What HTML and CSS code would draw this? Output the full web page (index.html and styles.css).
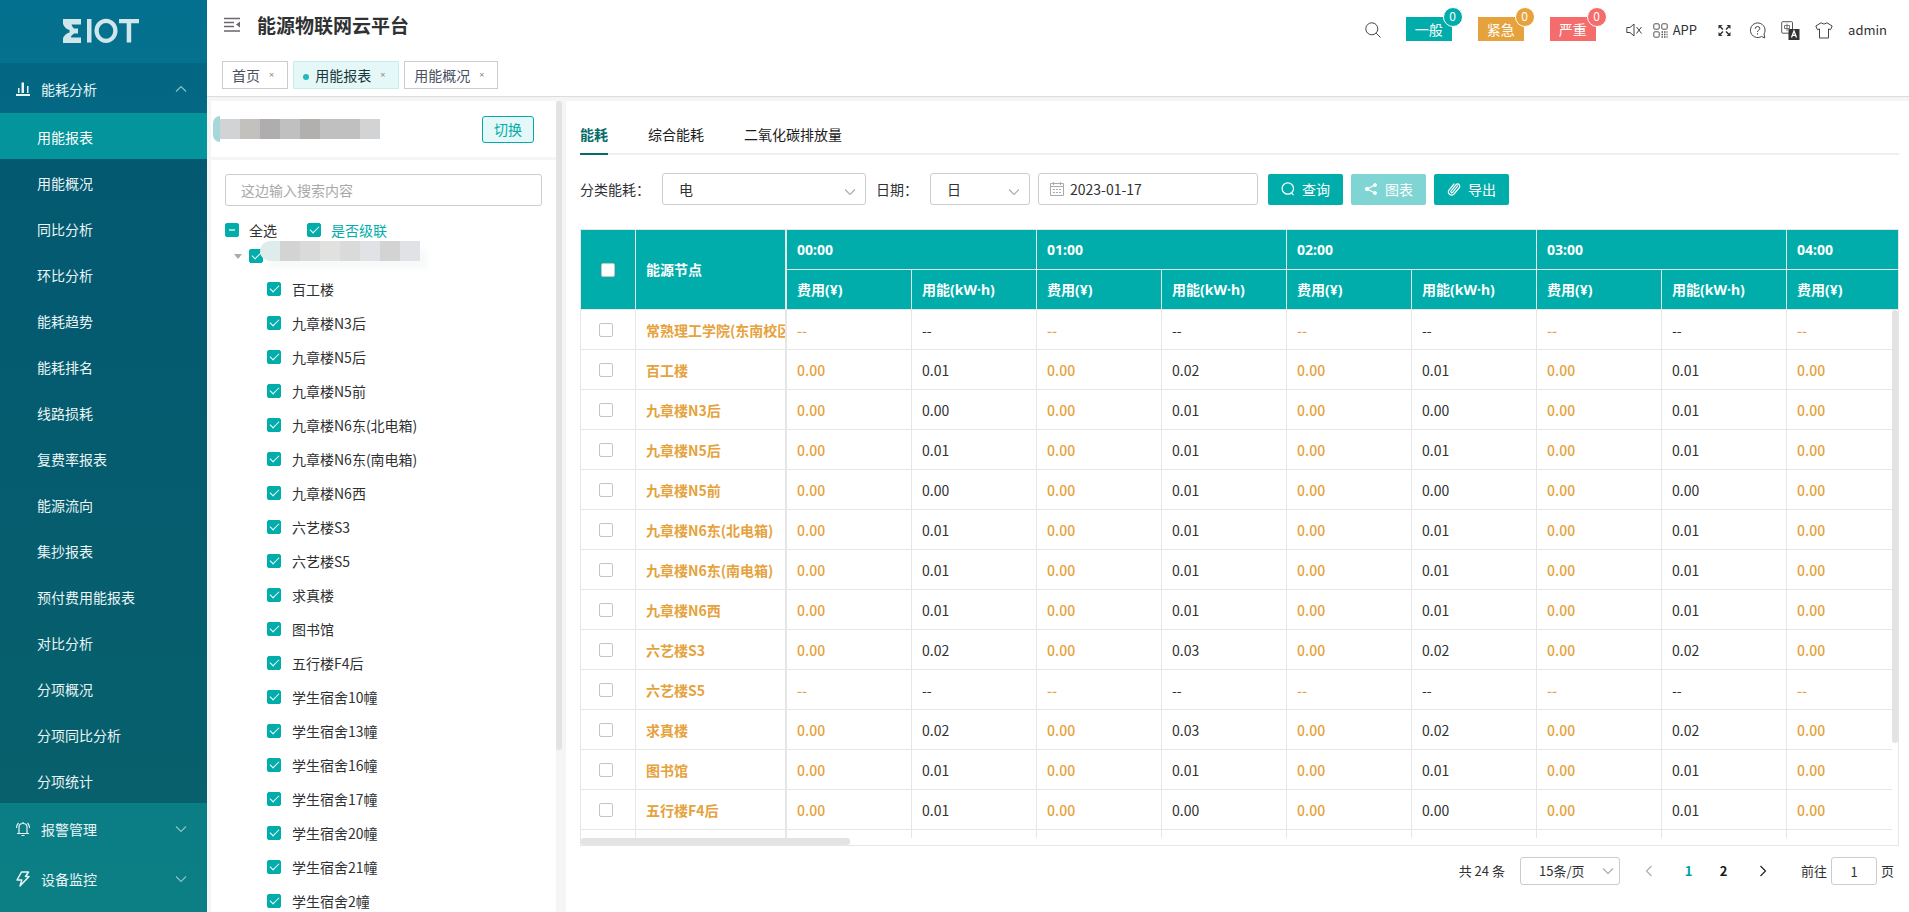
FILE: index.html
```html
<!DOCTYPE html>
<html lang="zh-CN">
<head>
<meta charset="utf-8">
<title>能源物联网云平台</title>
<link rel="stylesheet" href="styles.css">
</head>
<body>
<svg class="defs" aria-hidden="true">
  <symbol id="chev" viewBox="0 0 12 12"><path d="M1 3.5l5 5 5-5" fill="none" stroke="currentColor" stroke-width="1.1"/></symbol>
</svg>
<div class="app">
  <aside class="sidebar">
    <div class="logo">
      <svg width="78" height="26" viewBox="0 0 78 26" role="img" aria-label="EIOT" fill="currentColor">
        <path d="M1 1H19V6.500H9.500Q10 8.500 12 10.500H16V15.500H12Q9 17.500 9 19.500H19V25H1V20Q3 15.500 7.500 14.500V12Q3 11 1 6Z"/>
        <path d="M25 1h4.500v23.500H25zM57 1h20v4.200h-7.800v19.300h-4.500V5.200H57z"/>
        <ellipse cx="44" cy="12.800" rx="9.400" ry="10" fill="none" stroke="currentColor" stroke-width="4.300"/>
      </svg>
    </div>
    <nav>
      <button class="group open" type="button">
        <svg width="16" height="16" viewBox="0 0 16 16" fill="currentColor"><path d="M1 13h14v2H1zM3 7h1.500v5H3zM6.500 1.500H8V12H6.500zM8 1.500h1V12H8zM12 5h1.500v7H12z"/></svg>
        <span>能耗分析</span><svg class="chev up"><use href="#chev"/></svg>
      </button>
      <div class="sub">
        <a class="on" href="#">用能报表</a>
        <a href="#">用能概况</a>
        <a href="#">同比分析</a>
        <a href="#">环比分析</a>
        <a href="#">能耗趋势</a>
        <a href="#">能耗排名</a>
        <a href="#">线路损耗</a>
        <a href="#">复费率报表</a>
        <a href="#">能源流向</a>
        <a href="#">集抄报表</a>
        <a href="#">预付费用能报表</a>
        <a href="#">对比分析</a>
        <a href="#">分项概况</a>
        <a href="#">分项同比分析</a>
        <a href="#">分项统计</a>
      </div>
      <button class="group" type="button">
        <svg width="16" height="16" viewBox="0 0 16 16" fill="none" stroke="currentColor" stroke-width="1.200"><path d="M2 12.500h12M4 12V6q0-3.500 4-3.500T12 6v6M8 1v1.500M6.500 14.500h3M1.500 7q0-3 2-5M14.500 7q0-3-2-5"/></svg>
        <span>报警管理</span><svg class="chev"><use href="#chev"/></svg>
      </button>
      <button class="group" type="button">
        <svg width="16" height="16" viewBox="0 0 16 16" fill="none" stroke="currentColor" stroke-width="1.500" stroke-linejoin="round"><path d="M6.500 1h7L10.500 5.500H14L5 15l1.800-6H2z"/></svg>
        <span>设备监控</span><svg class="chev"><use href="#chev"/></svg>
      </button>
    </nav>
  </aside>

  <div class="page">
    <header class="topbar">
      <div class="bar">
        <button class="icon" type="button" aria-label="收起菜单">
          <svg width="17" height="16" viewBox="0 0 17 16"><path d="M0 1.500h16M0 5.500h10M0 9.500h10M0 14h16" stroke="#6d666c" stroke-width="1.600"/><path d="M12 7.500l4-3v6z" fill="#6d666c"/></svg>
        </button>
        <h1>能源物联网云平台</h1>
        <div class="tools">
          <button class="icon search" type="button" aria-label="搜索"><svg width="16" height="16" viewBox="0 0 16 16" fill="none" stroke="#444"><circle cx="6.800" cy="6.800" r="6"/><path d="M11.200 11.200L15.500 15.500"/></svg></button>
          <button class="alarm teal" type="button">一般<i>0</i></button>
          <button class="alarm amber" type="button">紧急<i>0</i></button>
          <button class="alarm red" type="button">严重<i>0</i></button>
          <button class="icon mute" type="button" aria-label="静音"><svg width="16" height="14" viewBox="0 0 16 14" fill="none" stroke="#444"><path d="M.8 4.500H4L8 1v12L4 9.500H.8zM10.500 4l5 6.500M15.500 4l-5 6.500"/></svg></button>
          <a class="applink" href="#"><svg width="15" height="15" viewBox="0 0 15 15" fill="none" stroke="#555"><rect x=".8" y=".8" width="5.400" height="5.400" rx="1"/><rect x="8.800" y=".8" width="5.400" height="5.400" rx="1"/><rect x=".8" y="8.800" width="5.400" height="5.400" rx="1"/><path d="M8.500 9h1.500m1 0h1.500m1 0h1M8.500 11.500h1.500m1 0h1.500m1 0h1M8.500 14h1.500m1 0h1.500m1 0h1" stroke-width="1.600"/></svg>APP</a>
          <button class="icon full" type="button" aria-label="全屏"><svg width="13" height="13" viewBox="0 0 13 13" fill="#333" stroke="#333"><path d="M.5 1h4L.5 5zM12.500 1h-4l4 4zM.5 12h4l-4-4zM12.500 12h-4l4-4z" stroke="none"/><path d="M2 2.500l3 3M11 2.500l-3 3M2 10.500l3-3M11 10.500l-3-3" stroke-width="1.500"/></svg></button>
          <button class="icon help" type="button" aria-label="帮助"><svg width="17" height="17" viewBox="0 0 17 17" fill="none" stroke="#444"><path d="M12.500 14.500A7.300 7.300 0 1 1 15 12l.8 4z"/><path d="M6.200 6.800q0-2.300 2.300-2.300t2.300 2q0 1.200-1.300 1.800-1 .5-1 1.700M8.500 11.300v1.300"/></svg></button>
          <button class="icon lang" type="button" aria-label="语言"><svg width="19" height="19" viewBox="0 0 19 19" fill="none"><rect x=".7" y=".7" width="10.800" height="11.500" rx="1" stroke="#555"/><path d="M3.500 4.500h5v3h-5zM6 2.500v7.500" stroke="#777"/><rect x="7.500" y="8" width="11" height="11" fill="#333"/><path d="M10.500 16.500l2.500-6.500 2.500 6.500M11.300 14.300h3.400" stroke="#fff" stroke-width="1.300"/></svg></button>
          <button class="icon theme" type="button" aria-label="主题"><svg width="18" height="17" viewBox="0 0 18 17" fill="none" stroke="#444" stroke-linejoin="round"><path d="M6 .8q3 2.600 6 0L17.200 4l-1.700 3.700-2-.7v9h-9V7l-2 .7L.8 4z"/></svg></button>
          <a class="user" href="#">admin</a>
        </div>
      </div>
      <div class="tags">
        <a href="#">首页<b>×</b></a>
        <a class="on" href="#"><em></em>用能报表<b>×</b></a>
        <a href="#">用能概况<b>×</b></a>
      </div>
    </header>

    <div class="work">
      <section class="left">
        <div class="site">
          <div class="mosaic"><i class="m0"></i><i class="m5"></i><i class="m1"></i><i class="m2"></i><i class="m3"></i><i class="m4"></i><i class="m3"></i><i class="m3"></i><i class="m5"></i></div>
          <button type="button">切换</button>
        </div>
        <div class="treebox">
          <input class="find" type="text" placeholder="这边输入搜索内容" aria-label="搜索">
          <div class="opts">
            <label><input type="checkbox" class="half">全选</label>
            <label class="hl"><input type="checkbox" checked>是否级联</label>
          </div>
          <div class="root"><span class="caret"></span><input type="checkbox" checked aria-label="根节点"><div class="mosaic soft"><i class="s0"></i><i class="s1"></i><i class="s2"></i><i class="s3"></i><i class="s2"></i><i class="s4"></i><i class="s1"></i><i class="s4"></i></div></div>
          <div class="nodes">
            <label><input type="checkbox" checked>百工楼</label>
            <label><input type="checkbox" checked>九章楼N3后</label>
            <label><input type="checkbox" checked>九章楼N5后</label>
            <label><input type="checkbox" checked>九章楼N5前</label>
            <label><input type="checkbox" checked>九章楼N6东(北电箱)</label>
            <label><input type="checkbox" checked>九章楼N6东(南电箱)</label>
            <label><input type="checkbox" checked>九章楼N6西</label>
            <label><input type="checkbox" checked>六艺楼S3</label>
            <label><input type="checkbox" checked>六艺楼S5</label>
            <label><input type="checkbox" checked>求真楼</label>
            <label><input type="checkbox" checked>图书馆</label>
            <label><input type="checkbox" checked>五行楼F4后</label>
            <label><input type="checkbox" checked>学生宿舍10幢</label>
            <label><input type="checkbox" checked>学生宿舍13幢</label>
            <label><input type="checkbox" checked>学生宿舍16幢</label>
            <label><input type="checkbox" checked>学生宿舍17幢</label>
            <label><input type="checkbox" checked>学生宿舍20幢</label>
            <label><input type="checkbox" checked>学生宿舍21幢</label>
            <label><input type="checkbox" checked>学生宿舍2幢</label>
          </div>
        </div>
      </section>
      <div class="gutter"><span></span></div>

      <main class="right">
        <div class="tabs"><a class="on" href="#">能耗</a><a href="#">综合能耗</a><a href="#">二氧化碳排放量</a></div>
        <form class="filter">
          <label for="kind">分类能耗<span class="colon">：</span></label>
          <span class="sel kind"><select id="kind"><option>电</option></select><svg class="chev"><use href="#chev"/></svg></span>
          <label for="unit">日期<span class="colon">：</span></label>
          <span class="sel unit"><select id="unit"><option>日</option></select><svg class="chev"><use href="#chev"/></svg></span>
          <span class="date"><svg width="14" height="14" viewBox="0 0 14 14" fill="none" stroke="#aaa"><path d="M.5 1.500h13v12H.5zM.5 4.500h13M3.500 0v3M10.500 0v3M3 7.500h2m1 0h2m1 0h2M3 10.500h2m1 0h2m1 0h2"/></svg><input type="text" value="2023-01-17" aria-label="日期"></span>
          <button type="button"><svg width="14" height="14" viewBox="0 0 14 14" fill="none" stroke="#fff" stroke-width="1.200"><circle cx="6.800" cy="6.500" r="5.700"/><path d="M10.500 11l2 2.200"/></svg>查询</button>
          <button type="button" class="dim"><svg width="14" height="14" viewBox="0 0 14 14" fill="#fff" stroke="#fff"><circle cx="3" cy="7" r="1.700"/><circle cx="11" cy="3" r="1.500"/><circle cx="11" cy="11" r="1.500"/><path d="M11 3L3 7l8 4" fill="none" stroke-width="1.300"/></svg>图表</button>
          <button type="button"><svg width="14" height="14" viewBox="0 0 14 14" fill="none" stroke="#fff" stroke-width="1.200" stroke-linecap="round"><path d="M10.500 4L5.500 10.500Q4 11.500 3.800 9.500L8.800 3Q11 1 12.200 2.800T12 6L7 12Q4.500 14 2.500 12.200T2 8L7 2"/></svg>导出</button>
        </form>

        <div class="grid">
          <div class="view">
            <table>
              <colgroup><col class="c-chk"><col class="c-name"><col span="8" class="c-val"><col></colgroup>
              <thead>
                <tr><th rowspan="2" class="chk"><input type="checkbox" aria-label="全部"></th><th rowspan="2" class="name">能源节点</th><th colspan="2">00:00</th><th colspan="2">01:00</th><th colspan="2">02:00</th><th colspan="2">03:00</th><th>04:00</th></tr>
                <tr><th>费用(¥)</th><th>用能(kW·h)</th><th>费用(¥)</th><th>用能(kW·h)</th><th>费用(¥)</th><th>用能(kW·h)</th><th>费用(¥)</th><th>用能(kW·h)</th><th>费用(¥)</th></tr>
              </thead>
              <tbody>
                <tr><td class="chk"><input type="checkbox" aria-label="选择"></td><td class="name">常熟理工学院(东南校区)</td><td>--</td><td>--</td><td>--</td><td>--</td><td>--</td><td>--</td><td>--</td><td>--</td><td>--</td></tr>
                <tr><td class="chk"><input type="checkbox" aria-label="选择"></td><td class="name">百工楼</td><td>0.00</td><td>0.01</td><td>0.00</td><td>0.02</td><td>0.00</td><td>0.01</td><td>0.00</td><td>0.01</td><td>0.00</td></tr>
                <tr><td class="chk"><input type="checkbox" aria-label="选择"></td><td class="name">九章楼N3后</td><td>0.00</td><td>0.00</td><td>0.00</td><td>0.01</td><td>0.00</td><td>0.00</td><td>0.00</td><td>0.01</td><td>0.00</td></tr>
                <tr><td class="chk"><input type="checkbox" aria-label="选择"></td><td class="name">九章楼N5后</td><td>0.00</td><td>0.01</td><td>0.00</td><td>0.01</td><td>0.00</td><td>0.01</td><td>0.00</td><td>0.01</td><td>0.00</td></tr>
                <tr><td class="chk"><input type="checkbox" aria-label="选择"></td><td class="name">九章楼N5前</td><td>0.00</td><td>0.00</td><td>0.00</td><td>0.01</td><td>0.00</td><td>0.00</td><td>0.00</td><td>0.00</td><td>0.00</td></tr>
                <tr><td class="chk"><input type="checkbox" aria-label="选择"></td><td class="name">九章楼N6东(北电箱)</td><td>0.00</td><td>0.01</td><td>0.00</td><td>0.01</td><td>0.00</td><td>0.01</td><td>0.00</td><td>0.01</td><td>0.00</td></tr>
                <tr><td class="chk"><input type="checkbox" aria-label="选择"></td><td class="name">九章楼N6东(南电箱)</td><td>0.00</td><td>0.01</td><td>0.00</td><td>0.01</td><td>0.00</td><td>0.01</td><td>0.00</td><td>0.01</td><td>0.00</td></tr>
                <tr><td class="chk"><input type="checkbox" aria-label="选择"></td><td class="name">九章楼N6西</td><td>0.00</td><td>0.01</td><td>0.00</td><td>0.01</td><td>0.00</td><td>0.01</td><td>0.00</td><td>0.01</td><td>0.00</td></tr>
                <tr><td class="chk"><input type="checkbox" aria-label="选择"></td><td class="name">六艺楼S3</td><td>0.00</td><td>0.02</td><td>0.00</td><td>0.03</td><td>0.00</td><td>0.02</td><td>0.00</td><td>0.02</td><td>0.00</td></tr>
                <tr><td class="chk"><input type="checkbox" aria-label="选择"></td><td class="name">六艺楼S5</td><td>--</td><td>--</td><td>--</td><td>--</td><td>--</td><td>--</td><td>--</td><td>--</td><td>--</td></tr>
                <tr><td class="chk"><input type="checkbox" aria-label="选择"></td><td class="name">求真楼</td><td>0.00</td><td>0.02</td><td>0.00</td><td>0.03</td><td>0.00</td><td>0.02</td><td>0.00</td><td>0.02</td><td>0.00</td></tr>
                <tr><td class="chk"><input type="checkbox" aria-label="选择"></td><td class="name">图书馆</td><td>0.00</td><td>0.01</td><td>0.00</td><td>0.01</td><td>0.00</td><td>0.01</td><td>0.00</td><td>0.01</td><td>0.00</td></tr>
                <tr><td class="chk"><input type="checkbox" aria-label="选择"></td><td class="name">五行楼F4后</td><td>0.00</td><td>0.01</td><td>0.00</td><td>0.00</td><td>0.00</td><td>0.00</td><td>0.00</td><td>0.01</td><td>0.00</td></tr>
                <tr><td></td><td class="name"></td><td></td><td></td><td></td><td></td><td></td><td></td><td></td><td></td><td></td></tr>
              </tbody>
            </table>
            <div class="vbar"><span></span></div>
          </div>
          <div class="hbar"><span></span></div>
        </div>

        <div class="pager">
          <span class="total">共 24 条</span>
          <span class="sel size"><select aria-label="每页条数"><option>15条/页</option></select><svg class="chev"><use href="#chev"/></svg></span>
          <button type="button" aria-label="上一页" class="off"><svg class="chev prev"><use href="#chev"/></svg></button>
          <button type="button" class="cur">1</button>
          <button type="button">2</button>
          <button type="button" aria-label="下一页"><svg class="chev next"><use href="#chev"/></svg></button>
          <label class="jump">前往<input type="text" value="1">页</label>
        </div>
      </main>
    </div>
  </div>
</div>
</body>
</html>
```
FILE: styles.css
```css
* { box-sizing: border-box; }
body { margin: 0; overflow: hidden; font: 14px/20px "Noto Sans CJK SC", "Noto Sans", sans-serif; color: #303133; background: #fff; }
button, input, select { font: inherit; color: inherit; margin: 0; }
button { border: 0; background: none; padding: 0; }
a { color: inherit; text-decoration: none; }
i, em { font-style: normal; }
svg { flex: none; }
.defs { position: absolute; width: 0; height: 0; }
.chev { width: 12px; height: 12px; }
.app { display: flex; height: 100vh; }

/* sidebar */
.sidebar { flex: none; width: 207px; overflow: hidden; color: #e9f5f6; background: linear-gradient(#04708f, #0c7f84); }
.logo { height: 63px; display: flex; align-items: center; justify-content: center; padding: 0 5px 2px 0; color: #cfe6ea; }
.group { display: flex; align-items: center; gap: 10px; width: 100%; height: 50px; padding: 2px 20px 0 15px; text-align: left; }
.group.open { background: rgba(0, 55, 80, .16); }
.group span { flex: 1; }
.group .chev { color: #8fc2c9; }
.up { transform: rotate(180deg); }
.sub { background: rgba(0, 30, 50, .3); }
.sub a { display: flex; align-items: center; height: 46px; padding: 2px 0 0 37px; }
.sub .on { background: #03949c; color: #fff; }

/* header */
.page { flex: 1; min-width: 0; display: flex; flex-direction: column; }
.topbar { height: 97px; border-bottom: 1px solid #d8dce5; }
.bar { display: flex; align-items: flex-start; height: 61px; padding: 0 22px 0 17px; }
.icon { display: flex; }
.bar > .icon { margin-top: 17px; }
h1 { margin: 10px 0 0 16px; font-size: 19px; line-height: 30px; font-weight: 700; white-space: nowrap; }
.tools { display: flex; align-items: center; margin-left: auto; height: 60px; }
.search { margin-right: 25px; }
.alarm { position: relative; width: 46px; height: 24px; margin-right: 26px; line-height: 24px; color: #fff; }
.tools .alarm { margin-bottom: 2px; }
.alarm i { position: absolute; left: 37px; top: -10px; min-width: 20px; height: 20px; border: 1px solid #fff; border-radius: 10px; font-size: 12px; line-height: 16px; background: inherit; }
.teal { background: #00adab; }
.amber { background: #e6a23c; }
.red { background: #f56c6c; }
.mute { margin: 0 11px 0 4px; }
.applink { display: flex; align-items: center; gap: 5px; font-size: 13px; }
.full { margin: 0 18px 0 21px; }
.lang { margin: 0 15px; }
.user { margin-left: 15px; font-size: 13px; }
.tags { display: flex; gap: 5px; padding-left: 15px; }
.tags a { display: flex; align-items: center; height: 28px; padding: 0 13px 0 9px; border: 1px solid #ccc; color: #495060; }
.tags .on { background: #e5f7f7; border-color: #c4efec; color: #17383a; }
.tags b { margin-left: 9px; font: 400 9px/20px "Noto Sans", sans-serif; color: #888; }
.tags em { width: 6px; height: 6px; margin: 3px 6px 0 0; border-radius: 3px; background: #26b9b7; }

/* work area */
.work { flex: 1; min-height: 0; display: flex; padding: 4px 0 0 4px; background: #f5f5f5; }
.left { width: 345px; overflow: hidden; display: flex; flex-direction: column; gap: 3px; }
.site { flex: none; display: flex; align-items: center; justify-content: space-between; height: 56px; padding: 0 22px 0 2px; background: #fff; }
.site button { width: 52px; height: 27px; border: 1px solid #00adab; border-radius: 3px; background: #e5f7f7; color: #00adab; line-height: 24px; }
.mosaic { display: flex; }
.mosaic i { width: 20px; height: 20px; }
.mosaic .m0 { width: 7px; height: 26px; margin: -3px 0; border-radius: 7px 0 0 7px; background: #a6d8da; }
.m1 { background: #c2c1bd; }
.m2 { background: #b0adaf; }
.m3 { background: #c0c0c0; }
.m4 { background: #b2b0ae; }
.m5 { background: #d2d3d5; }
.treebox { flex: 1; padding: 14px; background: #fff; }
.find { display: block; width: 100%; height: 32px; padding: 0 15px; border: 1px solid #ccc; border-radius: 3px; outline: 0; }
.find::placeholder { color: #a9a9a9; opacity: 1; }
.opts { display: flex; gap: 30px; padding-top: 14px; }
.opts label, .nodes label { display: flex; align-items: center; gap: 10px; }
.opts label { height: 20px; }
.hl { color: #00adab; }
.nodes label { height: 34px; padding-left: 42px; gap: 11px; white-space: nowrap; }
.root { display: flex; align-items: center; height: 32px; padding-left: 9px; }
.caret { border: 4px solid transparent; border-top: 5px solid #aaa; border-bottom: 0; margin-right: 7px; }
.soft { margin: -10px 0 0 -3px; box-shadow: 8px 8px 6px #f8f9f9; }
.mosaic .s0 { background: #dfecec; border-radius: 10px 0 0 10px; }
.s1 { background: #d3d3d4; }
.s2 { background: #dadadb; }
.s3 { background: #e1e1e0; }
.s4 { background: #e0e2e5; }

/* checkbox */
input[type=checkbox] { appearance: none; flex: none; display: inline-grid; place-items: center; width: 14px; height: 14px; border: 1px solid #c4c4c4; border-radius: 2px; background: #fff; }
input[type=checkbox]:checked, .opts input.half { border-color: #00adab; background: #00adab; }
input[type=checkbox]:checked::after { content: ""; width: 8px; height: 4px; margin-bottom: 3px; border: solid #fff; border-width: 0 0 1px 1px; transform: rotate(-45deg); }
.half::after { content: ""; width: 6px; height: 2px; background: #9edfdd; }

.gutter { width: 10px; flex: none; }
.gutter span { display: block; width: 6px; height: 80%; border-radius: 3px; background: #e3e3e3; }

/* report */
.right { flex: 1; min-width: 0; display: flex; flex-direction: column; padding: 14px 10px 27px 14px; background: #fff; }
.tabs { display: flex; gap: 40px; height: 40px; border-bottom: 2px solid #efefef; color: #1c1c1c; }
.tabs a { height: 40px; line-height: 38px; }
.tabs .on { color: #086b6b; font-weight: 700; border-bottom: 2px solid #086b6b; }
.filter { display: flex; align-items: center; gap: 8px; margin-top: 18px; height: 32px; }
.filter label { margin-right: 4px; }
.colon { font-family: "Noto Sans CJK TC", sans-serif; }
.sel { position: relative; display: block; }
.sel select { appearance: none; width: 100%; height: 32px; padding: 0 16px; border: 1px solid #ccc; border-radius: 3px; background: #fff; }
.sel .chev { position: absolute; right: 10px; top: 13px; color: #aaa; pointer-events: none; }
.kind { width: 204px; margin-right: 2px; }
.unit { width: 100px; }
.date { display: flex; align-items: center; width: 220px; height: 32px; margin-right: 2px; padding-left: 11px; gap: 6px; border: 1px solid #ccc; border-radius: 3px; }
.date input { width: 100%; border: 0; padding: 0; outline: 0; background: none; }
.filter button { display: flex; align-items: center; justify-content: center; gap: 7px; width: 75px; height: 31px; border-radius: 2px; background: #00adab; color: #fff; }
.filter .dim { opacity: .5; }

.grid { flex: 1; min-height: 0; display: flex; flex-direction: column; margin-top: 24px; border: 1px solid #e6e6e6; }
.view { position: relative; flex: 1; min-height: 0; overflow: hidden; }
table { width: 100%; table-layout: fixed; border-collapse: separate; border-spacing: 0; }
.c-chk { width: 55px; }
.c-name { width: 151px; }
.c-val { width: 125px; }
th, td { height: 40px; padding: 0 10px; text-align: left; white-space: nowrap; overflow: hidden; border: solid #e6e6e6; border-width: 0 1px 1px 0; }
th { background: #00adab; color: #fff; font-family: "Noto Sans", "Noto Sans CJK SC", sans-serif; font-weight: 700; }
th:last-child { border-right: 0; }
.name { border-right-width: 2px; }
.chk { text-align: center; padding: 0; line-height: 0; }
td.chk { padding-right: 4px; }
td:nth-child(odd):not(.chk) { color: #e6a23c; font-weight: 500; }
td.name { color: #e6a23c; font-weight: 700; }
.vbar { position: absolute; right: 0; top: 80px; bottom: 0; width: 6px; background: #fff; }
.vbar span { display: block; height: 82%; border-radius: 3px; background: #e3e3e3; }
.hbar { height: 7px; }
.hbar span { display: block; width: 269px; height: 7px; border-radius: 3px; background: #e3e3e3; }

.pager { display: flex; align-items: center; justify-content: flex-end; height: 28px; margin-top: 11px; padding-right: 5px; font-size: 13px; }
.size { width: 100px; margin: 0 15px; }
.size select { height: 28px; padding: 0 18px; }
.size .chev { top: 8px; right: 6px; }
.pager button { display: flex; justify-content: center; width: 35px; font-weight: 700; color: #1a1a1a; }
.pager button:last-of-type { width: 44px; }
.pager .off { width: 28px; margin-right: 8px; color: #aaa; }
.pager .cur { color: #00a0a5; }
.prev { transform: rotate(90deg); }
.next { transform: rotate(-90deg); }
.jump { display: flex; align-items: center; gap: 4px; margin-left: 16px; }
.jump input { width: 46px; height: 28px; border: 1px solid #ccc; border-radius: 3px; padding: 0; text-align: center; }
```
